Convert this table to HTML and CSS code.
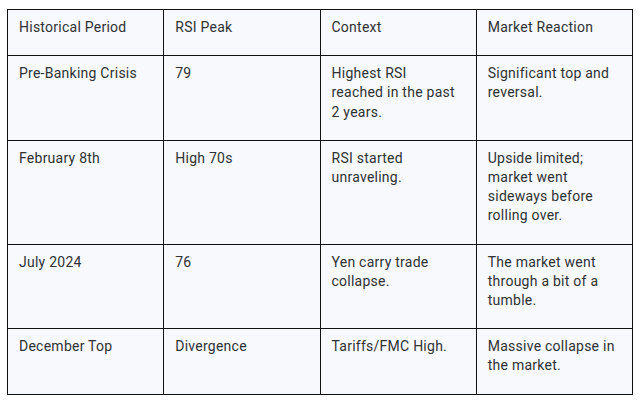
FILE: index.html
```html
<!DOCTYPE html>
<html lang="en">
<head>
<meta charset="utf-8">
<title>RSI Peaks</title>
<link rel="stylesheet" href="styles.css">
</head>
<body>
<div class="page">
  <table class="rsi-table">
    <thead>
      <tr>
        <th>Historical Period</th>
        <th>RSI Peak</th>
        <th>Context</th>
        <th>Market Reaction</th>
      </tr>
    </thead>
    <tbody>
      <tr>
        <td>Pre-Banking Crisis</td>
        <td>79</td>
        <td>Highest RSI reached in the past 2 years.</td>
        <td>Significant top and reversal.</td>
      </tr>
      <tr>
        <td>February 8th</td>
        <td>High 70s</td>
        <td>RSI started unraveling.</td>
        <td>Upside limited; market went sideways before rolling over.</td>
      </tr>
      <tr>
        <td>July 2024</td>
        <td>76</td>
        <td>Yen carry trade collapse.</td>
        <td>The market went through a bit of a tumble.</td>
      </tr>
      <tr>
        <td>December Top</td>
        <td>Divergence</td>
        <td>Tariffs/FMC High.</td>
        <td>Massive collapse in the market.</td>
      </tr>
    </tbody>
  </table>
</div>
</body>
</html>
```

FILE: styles.css
```css
html, body {
  margin: 0;
  padding: 0;
  background: #ffffff;
}

.page {
  padding: 9px 0 0 7px;
  font-family: Roboto, "Noto Sans", Arial, sans-serif;
  font-size: 14px;
  letter-spacing: 0.25px;
  color: #2f3133;
}

.rsi-table {
  width: 626px;
  border-collapse: collapse;
  table-layout: fixed;
  background: #f8f9fd;
}

.rsi-table th,
.rsi-table td {
  width: 25%;
  border: 1px solid #111;
  padding: 8px 17px 18px 11px;
  line-height: 19.2px;
  text-align: left;
  vertical-align: top;
  font-weight: 400;
}
```
